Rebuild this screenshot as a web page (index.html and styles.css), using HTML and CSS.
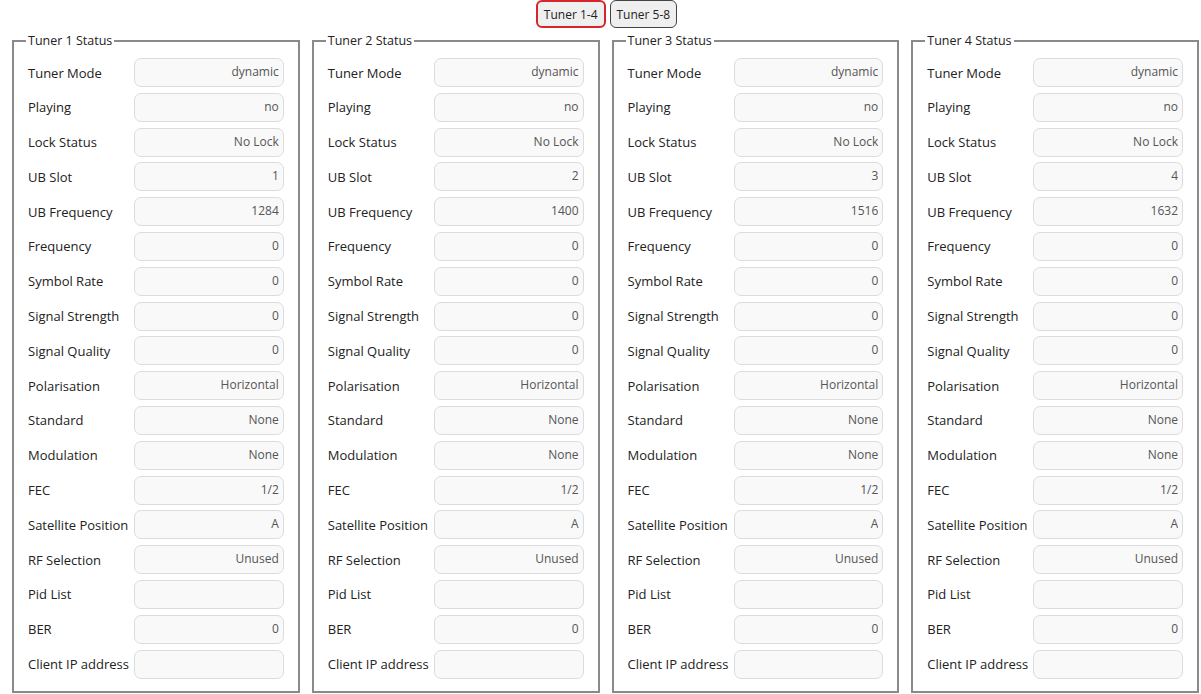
FILE: index.html
```html
<!DOCTYPE html>
<html lang="en">
<head>
    <meta charset="UTF-8">
    <title>Tuner Status</title>
    <link rel="stylesheet" href="styles.css">
</head>
<body>
    <div class="tabs">
        <button class="tab-btn active">Tuner 1-4</button>
        <button class="tab-btn">Tuner 5-8</button>
    </div>

    <div class="tuners" id="tuners"></div>

    <script>
        const fields = ['Tuner Mode', 'Playing', 'Lock Status', 'UB Slot', 'UB Frequency', 'Frequency',
            'Symbol Rate', 'Signal Strength', 'Signal Quality', 'Polarisation', 'Standard', 'Modulation',
            'FEC', 'Satellite Position', 'RF Selection', 'Pid List', 'BER', 'Client IP address'];
        const ubFreq = [1284, 1400, 1516, 1632];
        const container = document.getElementById('tuners');

        for (let t = 1; t <= 4; t++) {
            const values = ['dynamic', 'no', 'No Lock', t, ubFreq[t - 1], 0, 0, 0, 0, 'Horizontal',
                'None', 'None', '1/2', 'A', 'Unused', '', 0, ''];
            let html = '<fieldset class="tuner"><legend>Tuner ' + t + ' Status</legend>';
            fields.forEach(function(name, i) {
                html += '<label>' + name + '</label><input type="text" readonly value="' + values[i] + '">';
            });
            html += '</fieldset>';
            container.insertAdjacentHTML('beforeend', html);
        }
    </script>
</body>
</html>
```

FILE: styles.css
```css
* {
    box-sizing: border-box;
}

body {
    margin: 0;
    font-family: "Open Sans", "Noto Sans", sans-serif;
    font-size: 13px;
    color: #222;
    background: #fff;
}

.tabs {
    display: flex;
    justify-content: center;
    gap: 4px;
    padding-left: 12px;
    height: 33px;
}

.tab-btn {
    height: 28px;
    margin: 0;
    padding: 0 6px;
    font-family: inherit;
    font-size: 12px;
    color: #222;
    background: #efefef;
    border: 1px solid #444;
    border-radius: 6px;
}

.tab-btn.active {
    border: 2px solid #d5262b;
}

.tuners {
    display: flex;
    gap: 12px;
    padding: 0 2px 0 12px;
}

.tuner {
    flex: 1;
    margin: 0;
    padding: 9px 14px 12px 14px;
    border: 2px solid #8a8a8a;
    display: grid;
    grid-template-columns: 106px 1fr;
    row-gap: 5.8px;
    align-items: center;
}

.tuner legend {
    padding: 0 2px;
    margin-left: -2px;
    line-height: 16px;
    font-size: 12.5px;
}

.tuner label {
    white-space: nowrap;
}

.tuner input {
    height: 29px;
    width: 100%;
    padding: 0 4px 2px 4px;
    font-family: inherit;
    font-size: 12px;
    color: #555;
    text-align: right;
    background: #f9f9f9;
    border: 1px solid #dcdcdc;
    border-radius: 7px;
    outline: none;
}
```
